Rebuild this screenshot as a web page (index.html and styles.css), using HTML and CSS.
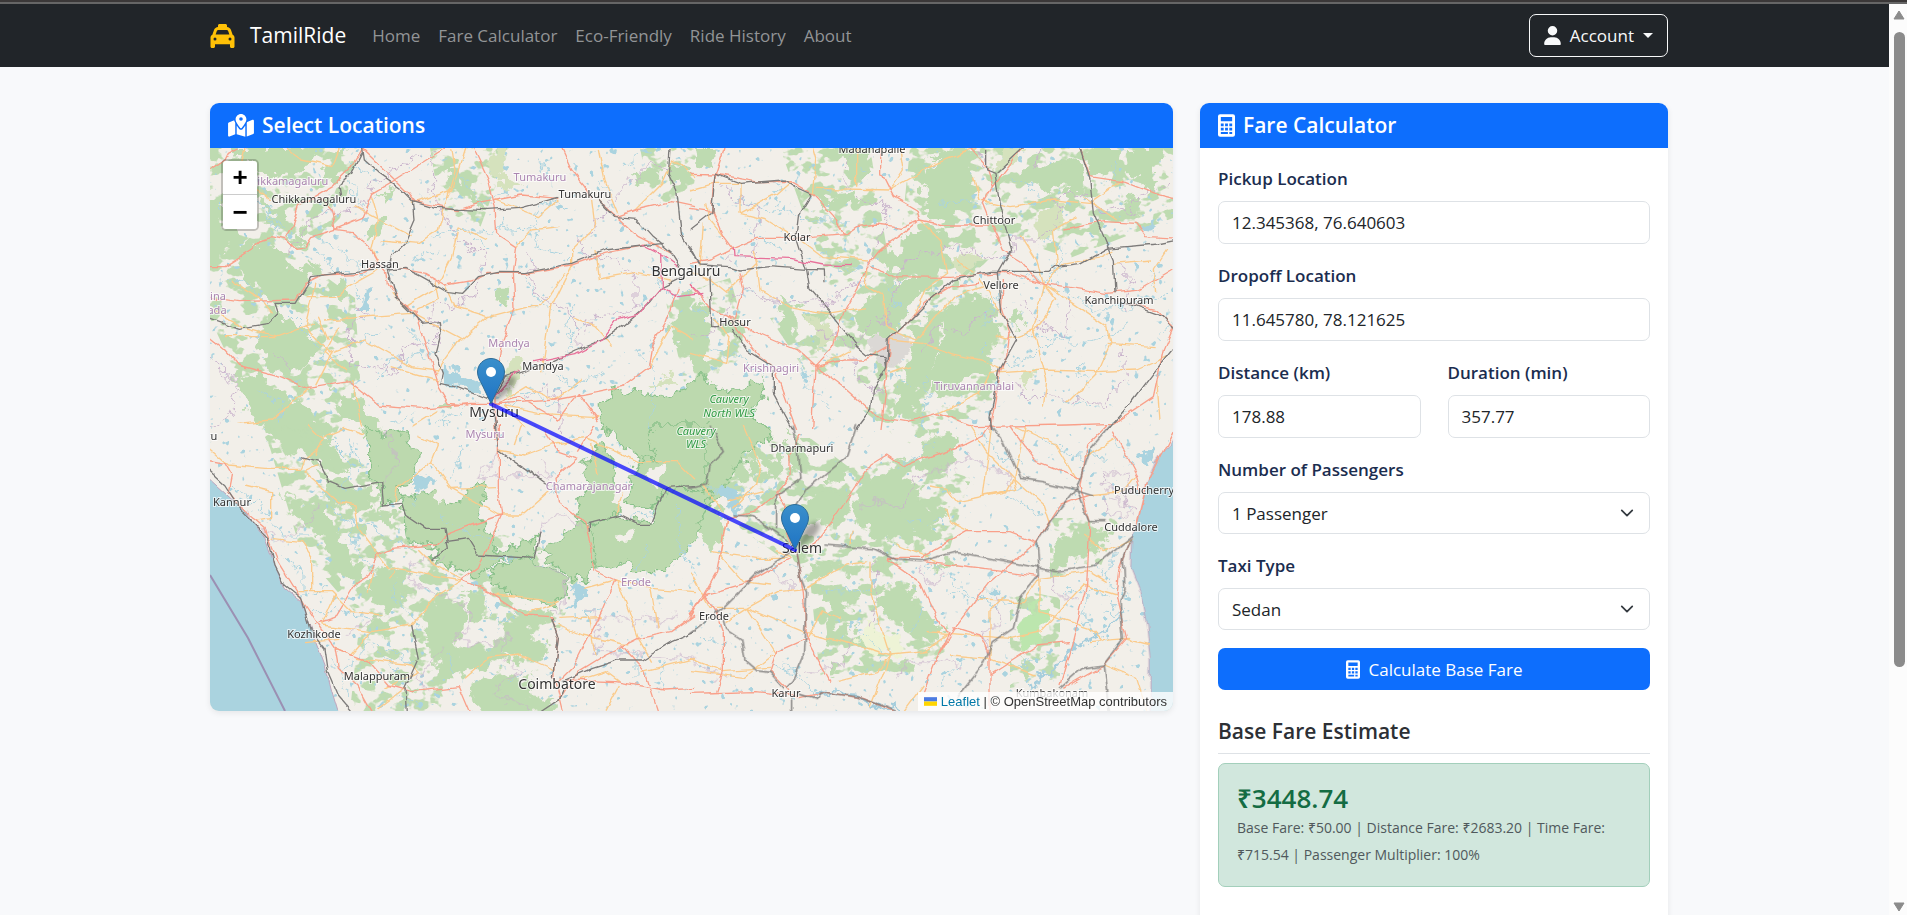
FILE: index.html
```html
<!DOCTYPE html>
<html lang="en">
<head>
<meta charset="utf-8">
<meta name="viewport" content="width=device-width, initial-scale=1">
<title>TamilRide</title>
<link rel="stylesheet" href="styles.css">
</head>
<body>
<svg class="symbols" aria-hidden="true">
  <symbol id="i-calc" viewBox="0 0 384 512"><path fill-rule="evenodd" d="M48 0H336A48 48 0 0 1 384 48V464A48 48 0 0 1 336 512H48A48 48 0 0 1 0 464V48A48 48 0 0 1 48 0ZM64 64V160H320V64ZM64 208V272H128V208ZM160 208V272H224V208ZM256 208V272H320V208ZM64 304V368H128V304ZM160 304V368H224V304ZM256 304V368H320V304ZM64 400V448H224V400ZM256 400V448H320V400Z"/></symbol>
  <symbol id="i-pin" viewBox="0 0 28 46">
    <path d="M14 .5C6.500.5.5 6.500.5 14c0 5 2.500 8.500 4.500 12.500L14 45.500l9-19c2-4 4.500-7.500 4.500-12.500C27.500 6.500 21.500.5 14 .5z" fill="url(#pinFill)" stroke="#2e6c97"/>
    <circle cx="14" cy="14" r="5" fill="#fff"/>
  </symbol>
</svg>
<div class="topline"></div>
<div class="window">
<div class="page">
  <nav class="navbar">
    <div class="container navbar-inner">
      <a class="brand" href="#">
        <svg class="icon-taxi" viewBox="0 0 512 512" aria-hidden="true"><path d="M192 0c-17.700 0-32 14.300-32 32V64c0 .1 0 .1 0 .2c-38.600 2.200-72.300 27.300-85.200 64.100L39.600 228.800C16.400 238.400 0 261.300 0 288V432v48c0 17.700 14.300 32 32 32H64c17.700 0 32-14.300 32-32V432H416v48c0 17.700 14.300 32 32 32h32c17.700 0 32-14.300 32-32V432 288c0-26.700-16.400-49.600-39.600-59.200L437.200 128.300c-12.900-36.800-46.600-62-85.200-64.100c0-.1 0-.1 0-.2V32c0-17.700-14.300-32-32-32H192zM165.400 128H346.600c13.600 0 25.700 8.600 30.200 21.400L402.900 224H109.100l26.100-74.600c4.500-12.800 16.600-21.400 30.200-21.400zM96 288a32 32 0 1 1 0 64 32 32 0 1 1 0-64zm288 32a32 32 0 1 1 64 0 32 32 0 1 1 -64 0z"/></svg>
        <span>TamilRide</span>
      </a>
      <ul class="nav-links">
        <li><a href="#">Home</a></li>
        <li><a href="#">Fare Calculator</a></li>
        <li><a href="#">Eco-Friendly</a></li>
        <li><a href="#">Ride History</a></li>
        <li><a href="#">About</a></li>
      </ul>
      <button class="account" type="button">
        <svg class="icon-user" viewBox="0 0 448 512" aria-hidden="true"><path d="M224 256A128 128 0 1 0 224 0a128 128 0 1 0 0 256zm-45.700 48C79.800 304 0 383.800 0 482.300C0 498.700 13.300 512 29.700 512H418.300c16.400 0 29.700-13.300 29.700-29.700C448 383.800 368.200 304 269.700 304H178.300z"/></svg>
        <span>Account</span><span class="caret"></span>
      </button>
    </div>
  </nav>

  <main class="container layout">
    <section class="card">
      <h2 class="card-title">
        <svg class="icon-map" viewBox="0 0 576 512" aria-hidden="true"><path d="M408 120c0 54.600-73.100 151.900-105.200 192c-7.700 9.600-22 9.600-29.600 0C241.100 271.900 168 174.600 168 120C168 53.700 221.700 0 288 0s120 53.700 120 120zm8 80.400c3.500-6.900 6.700-13.800 9.600-20.600c.5-1.200 1-2.500 1.500-3.700l116-46.400C558.900 123.400 576 135 576 152V422.800c0 9.800-6 18.600-15.100 22.300L416 503V200.400zM137.600 138.300c2.400 14.100 7.200 28.300 12.800 41.500c2.900 6.800 6.100 13.700 9.600 20.600V451.800L32.900 502.700C17.100 509 0 497.400 0 480.400V209.600c0-9.800 6-18.600 15.100-22.300l122.600-49zM327.800 332c13.900-17.400 35.700-45.700 56.200-77V504.300L192 449.400V255c20.500 31.300 42.300 59.600 56.200 77c20.500 25.600 59.100 25.600 79.600 0zM288 152a40 40 0 1 0 0-80 40 40 0 1 0 0 80z"/></svg>
        Select Locations
      </h2>
      <div class="map">
        <svg class="map-canvas" viewBox="0 0 963 563" preserveAspectRatio="xMidYMid slice" role="img" aria-label="Route map from Mysuru to Salem">
          <defs>
            <linearGradient id="pinFill" x1="0" y1="0" x2="0" y2="1"><stop offset="0" stop-color="#3a8fcb"/><stop offset="1" stop-color="#1f74c4"/></linearGradient>
            <filter id="rough" filterUnits="userSpaceOnUse" x="-20" y="-20" width="1010" height="610" color-interpolation-filters="sRGB"><feTurbulence type="fractalNoise" baseFrequency="0.07" numOctaves="4" seed="4"/><feDisplacementMap in="SourceGraphic" scale="26" xChannelSelector="R" yChannelSelector="G"/></filter>
            <filter id="wiggle" filterUnits="userSpaceOnUse" x="-20" y="-20" width="1010" height="610" color-interpolation-filters="sRGB"><feTurbulence type="fractalNoise" baseFrequency="0.06" numOctaves="2" seed="9"/><feDisplacementMap in="SourceGraphic" scale="7" xChannelSelector="R" yChannelSelector="G"/></filter>
            <filter id="jag" filterUnits="userSpaceOnUse" x="-20" y="-20" width="1010" height="610" color-interpolation-filters="sRGB"><feTurbulence type="fractalNoise" baseFrequency="0.09" numOctaves="3" seed="2"/><feDisplacementMap in="SourceGraphic" scale="18" xChannelSelector="R" yChannelSelector="G"/></filter>
            <filter id="speckle" filterUnits="userSpaceOnUse" x="-20" y="-20" width="1010" height="610" color-interpolation-filters="sRGB"><feTurbulence type="fractalNoise" baseFrequency="0.06 0.08" numOctaves="3" seed="11"/><feColorMatrix values="0 0 0 0 0  0 0 0 0 0  0 0 0 0 0  14 0 0 0 -7.200" result="spots"/><feComposite in="SourceGraphic" in2="spots" operator="in"/></filter>
            <filter id="drops" filterUnits="userSpaceOnUse" x="-20" y="-20" width="1010" height="610" color-interpolation-filters="sRGB"><feTurbulence type="fractalNoise" baseFrequency="0.13" numOctaves="2" seed="21"/><feColorMatrix values="0 0 0 0 0  0 0 0 0 0  0 0 0 0 0  0 16 0 0 -11.200" result="spots"/><feComposite in="SourceGraphic" in2="spots" operator="in"/></filter>
          </defs>
          <rect class="land" width="963" height="563"/>

          <g filter="url(#speckle)">
            <path class="wood" d="M0 0H150L130 70 90 110 145 150 150 230 120 300 190 330 200 400 260 430 230 563H140L150 470 90 400 60 300 0 170zM220 0H300L270 80 230 60zM430 0H490L480 60 440 50zM455 150 520 130 540 200 480 260zM570 0H660L680 120 620 140zM700 0H963V70L860 110 800 90 760 130 800 180 780 260 700 300 650 260 640 150 690 100zM560 170 640 160 650 210 600 230zM500 290 600 290 640 320 700 310 760 330 740 400 690 420 740 500 700 530 610 530 600 430 530 380zM840 370 910 370 890 420 840 430zM800 440 850 450 850 530 800 540zM250 380 380 400 350 480 260 470z"/>
          </g>
          <rect class="lake" width="963" height="563" filter="url(#drops)"/>

          <g filter="url(#rough)">
            <g transform="translate(-5 -8) scale(.33333)">
              <path class="wood" d="M60 24H330L340 60 290 90 250 110 170 100 150 60 100 80zM380 24H440L400 110 350 130zM0 160 30 210 60 260 100 270V310L60 330 20 380 0 350zM110 310 200 320 270 380 310 400 300 450 270 490H210L150 440 100 380zM210 490 240 540 290 560 330 620 300 680 250 700 190 690 160 620 180 560zM250 290 300 280 310 310 260 320zM390 420 430 440 410 475 385 460zM500 240 545 230 540 270 500 310 485 290zM160 170 230 220 240 250 180 230zM80 700 180 720 260 770 300 800 350 860 440 1000 330 960 200 900 180 870 130 810zM380 760H440L500 820 560 900 480 900 410 800zM695 80 760 100 800 160 850 195 840 210 770 175 740 120zM1400 520 1500 480V720L1440 640 1400 600zM1390 80 1440 80 1445 110 1400 140zM1280 100 1370 95 1340 130 1290 125zM700 800 735 795 730 820 700 820zM880 440 910 440 900 490 870 480zM520 160 570 150 550 190zM300 350 340 380 320 400z"/>
              <path class="wood light" d="M850 40 900 24 890 90 930 140 920 155 880 130 850 90zM920 660 950 660 930 760 900 750zM1330 740 1380 700 1400 740z"/>
            </g>
            <g transform="translate(480 -8) scale(.33333)">
              <path class="wood" d="M15 24H85L60 90 20 80zM700 90 760 60H850V170L820 220 760 250 700 210 720 160 680 130zM640 290 700 260 760 280 780 360 730 410H640L600 400 570 350 640 330zM600 420H700L720 450 660 480 640 560 590 590 500 580 490 520 560 440zM760 500 900 460 910 540 930 570 910 640 870 690 780 740 720 780V700L760 600zM680 560 760 500 750 600 710 740 640 840 610 830 620 740 650 700zM970 100 1150 60 1190 90 1180 160 1100 150 1000 120zM1190 24H1290L1280 90 1230 110 1190 70zM1320 24H1430L1380 120 1310 100zM1300 190 1350 170 1360 220 1310 230zM1370 120H1410L1400 170 1370 160zM450 24H550L540 90 500 120 470 110zM410 170 500 160 490 200 430 210zM270 470 320 500V600L290 610zM385 155H415V210L390 200zM380 220 405 240 390 265zM950 540 990 510 1000 540 960 580zM700 60 760 30 850 24 840 60z"/>
              <path class="wood light" d="M1050 220 1120 190 1110 270 1040 300zM350 520 430 560 440 610 380 620zM940 30 1000 24 960 90 920 90zM780 370 860 330 890 350 800 400zM980 700 1030 700 1020 740z"/>
              <path class="urban" d="M540 600 600 580 680 600 610 690 550 670z"/>
            </g>
            <g transform="translate(-5 277) scale(.33333)">
              <path class="wood" d="M180 10 300 20 360 80 340 100 290 95 220 60zM340 140 400 160 440 190 530 170 490 250 420 250 380 230zM250 250 340 235 370 240 380 310 420 340V400L470 430 480 470H430L380 420 360 350 330 310zM490 430 610 450V500L560 570 500 520zM660 580 700 510 790 550 800 590 750 640 760 660 700 750V690L670 640zM700 680 890 650 920 720 850 700 770 760 700 750zM890 580 1040 560 1020 600 960 640 1030 650 1020 710 950 710 890 680zM800 790 880 740 940 760 980 750 960 810 1050 820 1040 840 980 870H820zM780 500 850 510 840 590 810 590zM520 580 550 590 540 620 510 610zM590 770 660 790 620 800zM520 240 560 270 580 310 540 300zM230 205 300 210 240 215z"/>
            </g>
            <g transform="translate(480 277) scale(.33333)">
              <path class="wood" d="M100 -20 170 30 100 100 110 180 70 200 30 170 0 190V-20zM0 190 50 200V230L100 260V330L60 380 0 240zM120 110 190 100 200 150 150 180zM330 240 400 190 450 200 480 250 420 300 370 300zM480 230 560 150 640 90 630 160 700 170 680 240 640 270V340L590 370 510 300zM700 40 780 20 820 100 750 150 690 130zM640 240 760 250 740 330 640 340zM350 430 410 410 430 450 360 460zM410 500 480 480 500 530 440 560 450 610 490 600 480 640 420 660zM560 500 650 480 680 560 740 590 750 640 690 650 640 600 570 560zM1090 360 1150 320 1230 310 1260 340 1200 390 1090 430zM420 140 470 135 460 170 420 165zM220 100 280 90 260 150 220 160zM300 20 330 60 360 90 340 140 300 130zM480 430 530 440 500 460zM740 430 770 400 800 420zM650 700 680 750 620 730zM980 700 1030 730 1010 760zM420 710 460 730 420 740zM550 390 600 400 570 440zM820 160 850 165 840 190z"/>
              <path class="wood bright" d="M990 590 1030 540 1090 550 1040 640 1000 690 970 640z"/>
              <path class="field" d="M530 580 570 620 640 640 640 690 560 680 500 650z"/>
            </g>
          </g>
          <g filter="url(#jag)">
            <g transform="translate(-5 -8) scale(.33333)">
              <path class="park" d="M1180 790 1240 750 1300 760 1370 770 1450 740 1485 700 1520 740 1600 750 1665 720 1675 770 1640 820 1705 880 1600 960 1560 1040 1510 1100H1380L1350 1030 1310 960 1210 880z"/>
            </g>
            <g transform="translate(-5 277) scale(.33333)">
              <path class="park" d="M480 0H500L540 30 610 20 620 80 640 90 620 180 580 190 590 220 540 235 530 180 500 160V60zM590 215 690 200 720 210V240L760 230 830 165 840 190 820 290 860 320 870 380 980 350 1000 320 990 400 900 400 820 450 770 440 680 400 700 370 610 350zM850 440 920 400 1000 410 1080 450 1090 500 1060 540 950 520 870 480zM1010 380 1120 290 1150 300 1170 430 1150 470 1100 460zM1150 300 1230 270 1340 290 1350 240 1380 190H1520L1470 350 1380 440H1280L1270 410 1170 430zM1110 260 1150 180 1140 120 1180 60 1220 100 1230 150 1240 280 1130 290zM1260 240 1280 160 1310 100 1350 110 1330 0H1500V200L1380 190 1350 250z"/>
              <path class="clearing" d="M690 190 725 165 740 150 730 210 700 240zM1240 330 1290 320 1280 350 1240 350zM1320 150 1370 120 1390 140 1350 190zM1240 150 1260 170 1240 260 1225 220z"/>
            </g>
          </g>

          <g filter="url(#jag)">
            <g transform="translate(-5 -8) scale(.33333)">
              <path class="lake" d="M480 460 500 450V510L440 510 470 490zM715 670 760 700 830 730 840 770 780 750 720 720z"/>
              <path class="stream" d="M160 170 230 270M190 210 210 290M420 110 480 200 520 160M750 100 830 180 900 160M900 230 870 280 750 270 680 290M980 260 1020 180 1080 200M880 265 990 270 1010 330 1080 350M440 70 500 110M470 490 450 420 380 390 340 330M600 560 700 660M1110 500 1080 560 1110 620 1060 670M950 400 1000 480 1040 510M1340 380 1400 480 1470 450M250 520 330 600 350 660 420 640M30 180 90 240M40 430 120 420 190 500M330 290 420 340 480 400M700 640 560 660 520 720M1300 630 1350 700 1330 860M1220 160 1180 120M1270 80 1320 24M900 800 960 760 1080 800M780 800 700 860M450 600 520 580M620 370 700 330M1040 700 1100 740 1200 700M150 740 230 790 220 860M560 850 640 820M1000 60 1040 130M800 300 850 330"/>
            </g>
            <g transform="translate(480 -8) scale(.33333)">
              <path class="lake" d="M1360 250 1395 250 1390 275 1360 270zM1240 520 1260 520 1255 545 1240 540zM340 690 355 700 345 710z"/>
              <path class="stream" d="M140 180 260 210 370 240 480 240M170 260 220 300 280 330M400 330 450 390 500 400M750 190 830 180 890 200M940 450 900 520 880 560M930 395 1060 420 1150 470 1220 510 1330 500 1440 460M1080 420 1120 330 1080 300M940 680 1030 650 1080 600 1200 610 1310 560M600 430 630 500M960 110 1040 150 1060 200M60 640 160 650 220 720M330 640 360 740 420 800M700 860 720 760 700 700M1180 660 1160 700 1210 740M1370 390 1400 440M1280 60 1250 130M610 700 660 740M0 500 60 520M250 130 270 200M990 590 1080 590M390 620 440 660M1440 560 1410 590M1110 780 1200 800M860 640 900 600M500 60 540 120"/>
            </g>
            <g transform="translate(-5 277) scale(.33333)">
              <path class="lake" d="M630 150 690 160 660 190 630 195zM1100 470 1155 490 1120 540 1080 560 1110 510z"/>
              <path class="stream" d="M90 190 160 240 230 330 310 330M370 40 430 100 420 200M400 280 490 300 560 350 620 370M370 250 440 300 450 370 500 440M240 400 300 440 300 520 370 490M430 30 470 150M660 160 620 240M740 160 770 60M690 260 780 320 850 340M310 560 400 560 500 580M490 640 590 700 630 720M640 600 560 500 600 460M850 400 930 400M830 510 880 600 960 560M1190 560 1110 570M740 740 720 680M410 740 460 700 500 620M1280 270 1360 260M1290 430 1330 370M1290 690 1290 760M1420 240 1430 380 1470 440M380 700 440 820M640 840 590 820M1080 160 1040 210M970 740 910 770M540 690 580 740M1380 720 1360 790M340 210 420 230"/>
            </g>
            <g transform="translate(480 277) scale(.33333)">
              <path class="lake" d="M80 190 160 200 140 270 110 250 120 220 80 210zM890 500 930 500 920 520zM1340 90 1400 60 1380 110 1340 100z"/>
              <path class="stream" d="M40 185 190 215 240 200M700 420 760 440 850 520 970 540M250 720 320 740 370 810M400 490 480 500 540 490M500 600 560 650 580 720M660 620 700 550M870 20 920 100 1000 110M1060 40 1150 90 1250 100M1110 500 1230 500 1300 560M1180 510 1190 590M1220 420 1270 480 1320 510M640 290 700 280 760 300M950 210 1060 270M1270 380 1250 460M780 500 850 520M0 60 60 30M740 780 830 700M30 640 120 660M1320 120 1280 40M730 60 640 120M1060 690 960 740M1200 660 1260 640M1250 560 1310 570"/>
              <path class="river" d="M370 800 500 810 560 840 640 857M1010 790 1110 720 1160 660 1240 620 1300 560"/>
            </g>
          </g>

          <g filter="url(#jag)">
            <g class="district">
              <path transform="translate(-5 -8) scale(.33333)" d="M690 24 670 60 700 120 680 160 720 240 760 300 840 340 820 460 750 500 690 480 680 540 700 600 590 620 580 700 500 680 440 660 430 560 500 530 440 500M320 240 380 215 470 210 500 130 560 90 640 50M1120 300 1170 260 1200 200 1300 100 1330 70 1400 90M1120 300 1140 350 1230 350 1290 420V500L1150 540 1140 580M970 340 990 460 1110 530 1120 640M15 640 60 700 100 740 80 820 15 870M1060 870 1070 770 1030 740 960 780M210 640 250 680M240 340 270 320 330 230"/>
              <path transform="translate(480 -8) scale(.33333)" d="M475 24 470 150 530 190 590 190 590 260 550 330 530 420 460 440 420 500 380 480 240 490 180 450 120 470 110 540 60 580 0 590M380 570 440 590 490 620 560 540 590 560 620 430 640 370 740 330 800 320 890 350 960 350 970 300 1030 300 1100 250 1120 200 1090 180 1120 160 1200 170 1220 210 1280 200 1330 230 1320 180 1440 130M100 130 130 180 210 200 190 340 100 350M860 24 900 90M1030 80 1060 24M700 640 740 560 820 590 860 540 930 510M490 640 500 720 580 770M990 480 1060 560 1130 590 1140 480M1280 370 1330 420 1300 500M980 720 1000 760 1140 780 1230 790 1310 720 1300 620"/>
              <path transform="translate(-5 277) scale(.33333)" d="M110 250 180 330 220 350 330 270 340 240M540 10 580 110 530 170M620 480 610 430 640 410 720 400M620 480 790 540 800 600 740 650 880 655 910 630 890 690 950 750 900 760 870 810 910 820 980 857M1000 320 1020 280 1080 275 1140 320M990 410 1080 450 1080 540 1040 560M880 75 820 160 900 150 1040 150 1000 100M1150 560 1180 580 1240 580 1290 600 1300 570 1360 590 1420 570M1180 590 1180 680 1290 690 1470 700M720 660 640 760 660 800M430 620 540 570"/>
              <path transform="translate(480 277) scale(.33333)" d="M1240 140 1310 150 1320 200 1290 210 1330 260 1250 270 1240 210 1270 190 1240 170zM1260 220 1300 240 1310 180 1340 190M680 420 720 480 760 450 740 430M550 400 560 500 540 600M510 250 560 230 640 250 680 150 790 130 830 100 900 130 960 140 960 200M820 720 720 710 640 720 620 760M920 520 940 600 880 620 900 700M210 430 300 470 300 500M0 700 100 760M360 740 460 720 480 640M1090 430 1090 500 1150 520"/>
            </g>
          </g>

          <g filter="url(#wiggle)">
            <g transform="translate(-5 277) scale(.33333)">
              <path class="sea" d="M0 150 110 250 180 340 210 420 240 490 290 530 330 640 360 720 380 800 410 900H-20z"/>
            </g>
            <g transform="translate(480 277) scale(.33333)">
              <path class="sea" d="M1480 0 1400 110 1370 180 1340 300 1325 340 1322 430 1350 500 1370 600 1380 700V900H1500z"/>
            </g>
            <g class="secondary">
              <path transform="translate(-5 -8) scale(.33333)" d="M240 24 290 60 380 80 400 24M500 170 520 240 500 330 520 370M530 300 640 310 700 270 750 90 740 24M330 430 300 560 380 640 330 740M360 540 620 520 700 480 690 420M370 640 480 600 620 680 700 690M620 520 770 600 850 530 960 500 1010 500 1080 400M720 435 750 500 850 530M1160 180 1170 260 1100 330V380L1040 500 1010 700M935 320 980 270 1060 260M80 420 160 470 200 520M0 500 110 560 220 590 330 550M60 590 210 590M440 720 470 860M1100 530 1170 560 1220 620M310 745 200 840 100 850M765 600 690 700M1180 24 1200 120 1240 220M620 190 740 150 780 24M120 24 100 110 200 180M700 440 600 500 560 460M870 180 1000 230 1060 180M1170 330 1180 420 1290 400 1400 420M300 470 400 470 430 440 520 390M400 560 360 640 420 690M1470 110 1400 60 1370 130 1290 210M960 860 900 800 1000 820 1180 830M880 790 960 740 1050 780 1130 720M560 680 700 720M450 200 620 290M840 300 760 260 740 350 700 430M340 530 370 600M1330 680 1400 560 1470 600M620 860 700 810"/>
              <path transform="translate(480 -8) scale(.33333)" d="M0 150 70 130 150 130 150 220 230 240 310 290M370 165 380 60 370 24M380 145 600 150 740 70 860 24M300 125 260 160 150 220M690 240 750 300 770 400 700 450 670 530M500 24 500 140M850 110 870 180 960 200 1090 180 1200 190 1300 120M740 820 870 760 900 700 1060 690 1220 695 1340 690 1430 650M600 600 700 610 780 640 870 660 940 690M1060 430 1030 570 1070 720 1060 800M1060 440 1120 370 1230 350 1270 330M990 280 1040 360 1060 430M1030 570 950 600 920 590M1100 380 1090 270 1160 230M530 380 530 440 580 470 590 560 680 600 790 470 880 440M0 400 60 420 110 460 200 370 190 330M200 370 210 450 300 500 410 520 530 500M100 290 60 240 50 190M1030 580 1100 480 1060 430 1250 560 1260 610M1250 610 1400 620M1260 610 1220 700 1130 790M1280 240 1180 170M1430 330 1390 390 1400 460M600 700 660 680M0 640 110 670 120 590 70 540M390 680 480 630M850 400 800 360M320 290 400 350 540 360M1400 720 1410 840M940 530 870 420M630 24 640 90 600 150M1270 370 1380 360M40 250 30 380"/>
              <path transform="translate(-5 277) scale(.33333)" d="M0 60 70 120 180 130 290 130 300 100 350 60M310 0 350 40 330 90M350 40 420 10 480 30M200 340 290 350 320 390 320 500M120 180 200 200 200 280 150 290M340 120 300 140 400 230 450 240 460 310 520 390M520 390 550 430 620 440 770 465M570 440 550 460M640 370 690 420 770 460M570 230 580 190 680 110 700 60 640 30M680 110 740 190 870 185M740 190 880 270 950 270 1030 200M280 500 380 500 440 560 530 570M350 600 500 620 620 600 700 510 770 465M390 670 440 690 500 620M450 700 620 720 640 740 540 790M780 760 850 700 950 690 1050 735M960 570 1060 530 870 510M1060 580 1190 575M1140 490 1230 465 1340 490 1470 500M1240 470 1300 640 1340 710M1340 490 1360 610M1270 660 1130 630 1060 600M1240 770 1200 740 1110 770M1150 570 1170 690M1310 740 1470 700M1200 857 1240 780M880 75 960 90 1040 60 1140 40 1240 80 1300 110 1420 110 1470 160M950 0 930 60M1180 150 1160 60M1230 270 1250 200M300 650 400 640M490 500 500 440M390 510 350 600M520 850 600 790"/>
              <path transform="translate(480 277) scale(.33333)" d="M160 0 210 120 200 180 130 250M40 180 110 280 90 390 160 470 240 480M170 550 110 590M170 550 60 550 0 440M170 550 340 620 500 660 600 690 710 680M170 550 260 500 350 490 470 420 530 410M170 550 260 690M0 700 100 740 240 730M350 640 400 560 450 580M540 410 540 500 600 690 540 850M840 0 890 80 970 160 950 200 800 230 770 190 720 180M770 250 780 290 840 320M905 0 880 210 980 190 970 160M1010 0 970 160 1060 240 1080 300M700 680 780 620M710 620 960 640 1050 620 1180 480 1280 510M780 690 900 700 1040 750M860 525 1000 530 1050 460 1050 560 1200 610 1240 650M1050 460 1200 440 1250 470M970 0 1100 60 1160 160M1180 100 1280 40M1190 210 1300 200 1340 150M900 700 900 560 940 520M620 360 740 410M220 200 110 230M300 400 260 380M480 360 490 320M640 860 700 780M1300 640 1380 660M1200 650 1320 640M1240 720 1340 760 1370 857M440 770 560 740 600 690M60 380 200 400 290 400M1180 330 1240 380 1330 340M250 690 160 760 0 740"/>
            </g>
            <g class="trunk">
              <path transform="translate(-5 -8) scale(.33333)" d="M0 100 60 60 70 40 100 24M470 30 440 80 380 140 330 170 280 200 260 260 240 300M0 380 60 380 140 330 170 300 200 290 245 300 270 325 300 320 320 290 390 268 440 275 490 320 520 370 545 400 550 430 580 480 630 520 670 640 700 740 730 790 790 795M470 24 570 120 610 160 630 185 760 212 820 190 950 165 1060 175M570 120 720 24M570 120 500 160 470 235 390 268 380 210 340 170M805 24 850 120 870 200 875 280 935 320 925 400 930 500 890 610 870 720V900M1070 24 1100 90 1145 145 1160 175M0 470 100 485 270 480 300 430 350 405 470 400 520 370M580 385 660 400 720 435 810 420 850 400 960 400 1100 375 1200 340 1320 315M1180 180 1235 230 1300 290 1400 340M1235 230 1290 210 1400 185 1470 200M1420 440 1380 550 1340 620 1330 680 1250 740 1050 780 900 790 800 790 650 805 520 795 430 725 310 745 230 710 100 675 60 630 0 580M870 790 940 770 1060 840 1120 760 1180 840"/>
              <path transform="translate(480 -8) scale(.33333)" d="M105 24 70 130 65 210 100 290 130 330M0 100 75 102 200 125 300 125 370 165 430 230 460 280M0 205 70 215M0 370 60 360 130 325 200 295 310 295 470 280 500 260 560 252 640 262 690 240 760 255 900 255M575 24V100L610 170 680 210 690 240 630 290 570 330 530 380 500 450 450 540 430 620 375 680 365 870M840 24 890 80 910 140 880 190 900 240 940 330 990 360 1050 430M1000 24 910 140M540 375 600 410 780 412 950 400 1060 430 1250 460 1350 450 1450 390M870 430 780 440 700 490 650 550 600 600 590 700 570 870M1170 24 1200 110 1300 125 1390 160 1470 180M940 420 935 500 960 580 950 650 930 700 900 870M0 430 50 490 110 530 180 570 320 630 375 680 460 660 520 660 590 620M110 530 200 640 250 680 320 870M375 680 470 750 560 830 650 845 740 820 850 860 1130 855 1270 850 1390 770 1420 630 1450 560 1400 510 1310 490M1120 270 1240 245 1340 250 1370 290 1470 295M150 400 160 440 130 550"/>
              <path transform="translate(-5 277) scale(.33333)" d="M0 105 60 115 80 150 70 200 120 260 180 310 220 410 300 540 340 600 390 670M330 600 390 580 450 480 480 460 520 390 560 370 690 360 730 325 800 300 890 270M880 0V200L890 270 850 360 820 430 770 465 850 500 960 570 1040 575 1060 640 1050 720V760L1080 880M390 670 400 730 460 790 510 880M390 670 490 710 550 780 620 800 760 785 800 880M1020 20 1060 80 1120 100 1050 160 1060 230 1140 295 1160 370 1165 435 1230 465 1190 560 1110 720 1060 770M1170 0 1120 80M1060 830 1120 740 1200 690 1300 640 1400 620 1470 570M1080 765 1230 770 1380 795 1470 790M1250 660 1320 740 1365 880"/>
              <path transform="translate(480 277) scale(.33333)" d="M330 30 300 100V150L260 200 290 240V320L316 370 340 500 350 640 260 680 240 740 300 800M350 370 380 350 440 270 540 120 590 90 640 125 700 100 820 60 880 30 900 0M590 400 690 470 750 600 780 620 740 700 700 800M590 400 690 400 830 320 960 320 1040 350 1110 240 1200 210M700 410 860 430 1050 455M1040 350 900 470 800 600 740 700M790 605 870 630 900 700V880M960 0 1040 110 1170 160M1250 0 1190 60 1170 180 1200 290 1190 480 1150 640 1110 780M1320 350 1290 430 1280 520 1310 640 1240 720 1120 790M0 805 200 800 330 815 400 800 520 820 640 870M110 280 200 260 270 200M110 280 80 440 40 510 0 580M40 510 180 470 300 400M40 510 80 560 100 620V740L80 800M350 640 420 770M900 750 1040 660 1140 650M1450 20 1370 180 1340 300M1270 20 1340 150 1350 200M0 570 50 510"/>
            </g>
            <g class="rail">
              <path transform="translate(-5 -8) scale(.33333)" d="M470 24 475 60 520 100 590 150 625 185 690 205 840 212 940 205 1060 172M470 40 440 100 405 135 410 170M625 185 630 240 600 310 560 350 550 390 570 470 610 510 650 550 700 545 705 580 690 640 712 700 705 730 770 745 855 780M550 390 600 385 650 410 730 455 770 460 820 410 880 397 960 398 1100 370 1200 330 1310 318 1370 310M0 530 100 565 190 550 220 520 210 490 270 490 320 410 400 400 530 385M1180 180 1230 230 1290 235 1340 290 1400 340 1425 380M1395 24 1390 100 1415 150 1430 290 1470 350M1430 410 1370 440 1330 490 1250 560 1200 595 1110 630 1040 665 900 710 860 780 880 920"/>
              <path transform="translate(480 -8) scale(.33333)" d="M75 102 150 130 280 120 310 140 365 165 325 230 318 290 350 390 360 450 430 530 500 620 530 645 585 650 590 680 550 750 545 810 500 870M0 320 30 375 120 380 150 390 240 380 350 388 400 390 402 430M60 410 65 560 85 560M75 102 65 220 0 270M130 570 170 630 250 680V760L310 870M590 680 595 600 660 540 720 480 790 420 900 397H1080L1100 380 1170 370 1250 325 1400 312 1470 298M890 24V90L915 100 930 200 965 330 925 400 935 520 980 600 930 690 900 830 905 870M1170 24 1200 120 1210 220 1255 325 1270 360 1275 460M1310 490 1420 530 1470 590M1000 24 920 100M1470 600 1390 700 1330 780 1250 870"/>
              <path transform="translate(-5 277) scale(.33333)" d="M0 125 60 180 110 260 190 340 210 420 240 480 290 520 320 620 360 670 370 740 400 810 460 880M620 600 640 700 600 790 605 880M880 75 960 130 1030 180M290 95 340 110 370 170 420 190 530 170 535 240 590 235 600 270 660 310 720 310 730 370 680 405M720 350 790 340 820 390 990 400 1005 320M1150 320V295L1250 270 1300 295H1340L1380 190 1470 185M1040 580 1060 640 1045 760M1070 770 1160 730 1240 705H1310L1400 650 1470 620M1000 870 1060 830 1080 790"/>
              <path transform="translate(480 277) scale(.33333)" d="M310 0 320 60 330 160 260 210V310M500 0 470 90 350 190 320 240M130 270 190 275 260 320 320 370M400 360 550 372 620 405 690 410 800 380 1000 420 1100 440 1220 420 1330 330M316 370 200 450 100 550 0 625M318 380 330 450 350 500 340 700 310 770 290 790M305 820V880M100 570 110 610 155 640 165 710 200 740 240 745 280 790M330 805 380 820 390 800 500 815 600 850 640 870M1260 0 1200 70 1160 190 1080 290 1042 350 1048 450 990 520 970 610 910 650 880 720 800 820M900 0 940 50 990 160 1060 170 1160 195 1210 210M1160 190 1200 290 1250 290M1325 340 1300 400 1305 490 1290 530 1300 640 1240 720 1180 730 1110 790M1240 720 1260 880M0 190 50 180 60 120 100 80 60 0"/>
            </g>
            <g class="motorway">
              <path transform="translate(-5 -8) scale(.33333)" d="M1310 315 1380 350 1420 380M1370 340 1372 440 1420 470 1495 460M1370 440 1300 520 1240 535 1190 600 1110 640 990 665M940 690 865 770"/>
              <path transform="translate(480 -8) scale(.33333)" d="M130 325 132 350 300 355 400 375 485 377M0 430 40 470"/>
            </g>
          </g>
          <path class="sea-border" d="M0 427 38 490 75 563"/>

          <g class="city">
            <text x="104" y="55">Chikkamagaluru</text><text x="375" y="50">Tumakuru</text><text x="170" y="120">Hassan</text><text x="333" y="222">Mandya</text>
            <text x="662" y="5">Madanapalle</text><text x="587" y="93">Kolar</text><text x="784" y="76">Chittoor</text><text x="791" y="141">Vellore</text><text x="909" y="156">Kanchipuram</text><text x="525" y="178">Hosur</text>
            <text x="1" y="292">yu</text><text x="22" y="358">Kannur</text><text x="104" y="490">Kozhikode</text><text x="167" y="532">Malappuram</text><text x="592" y="304">Dharmapuri</text><text x="934" y="346">Puducherry</text><text x="921" y="383">Cuddalore</text><text x="504" y="472">Erode</text><text x="576" y="549">Karur</text><text x="842" y="549">Kumbakonam</text>
          </g>
          <g class="city big"><text x="476" y="128">Bengaluru</text><text x="284" y="269">Mysuru</text><text x="347" y="541">Coimbatore</text><text x="592" y="405">Salem</text></g>
          <g class="city region">
            <text x="76" y="37">Chikkamagaluru</text><text x="330" y="33">Tumakuru</text><text x="299" y="199">Mandya</text><text x="561" y="224">Krishnagiri</text><text x="764" y="242">Tiruvannamalai</text><text x="275" y="290">Mysuru</text><text x="379" y="342">Chamarajanagar</text><text x="426" y="438">Erode</text><text x="8" y="152">ina</text><text x="7" y="166">ada</text>
          </g>
          <g class="city reserve"><text x="519" y="255">Cauvery</text><text x="519" y="269">North WLS</text><text x="486" y="287">Cauvery</text><text x="486" y="300">WLS</text></g>

          <path class="pin-shadow" d="M282 256 290 236Q300 224 306 230 306 238 296 246zM586 402 594 382Q604 370 610 376 610 384 600 392z"/>
          <path class="route" d="M281 256 585 402"/>
          <use href="#i-pin" x="267" y="210" width="28" height="46"/>
          <use href="#i-pin" x="571" y="356" width="28" height="46"/>
        </svg>
        <div class="zoom-control">
          <button type="button" aria-label="Zoom in">+</button>
          <button type="button" aria-label="Zoom out">−</button>
        </div>
        <div class="attribution">
          <svg class="flag" viewBox="0 0 12 8" aria-hidden="true"><path fill="#4c7be1" d="M0 0h12v4H0z"/><path fill="#ffd500" d="M0 4h12v4H0z"/></svg>
          <a href="#">Leaflet</a> <span class="sep">|</span> © OpenStreetMap contributors
        </div>
      </div>
    </section>

    <section class="card">
      <h2 class="card-title"><svg class="icon-calc" aria-hidden="true"><use href="#i-calc"/></svg>Fare Calculator</h2>
      <form class="card-body">
        <div class="field"><label for="pickup">Pickup Location</label><input id="pickup" type="text" value="12.345368, 76.640603"></div>
        <div class="field"><label for="dropoff">Dropoff Location</label><input id="dropoff" type="text" value="11.645780, 78.121625"></div>
        <div class="field-row">
          <div class="field"><label for="distance">Distance (km)</label><input id="distance" type="text" value="178.88"></div>
          <div class="field"><label for="duration">Duration (min)</label><input id="duration" type="text" value="357.77"></div>
        </div>
        <div class="field"><label for="passengers">Number of Passengers</label>
          <div class="select"><select id="passengers"><option>1 Passenger</option><option>2 Passengers</option></select><svg viewBox="0 0 16 16" aria-hidden="true"><path d="m2 5 6 6 6-6"/></svg></div></div>
        <div class="field"><label for="taxi">Taxi Type</label>
          <div class="select"><select id="taxi"><option>Sedan</option><option>SUV</option></select><svg viewBox="0 0 16 16" aria-hidden="true"><path d="m2 5 6 6 6-6"/></svg></div></div>
        <button class="primary" type="button"><svg class="icon-calc" aria-hidden="true"><use href="#i-calc"/></svg>Calculate Base Fare</button>
        <h3 class="estimate-title">Base Fare Estimate</h3>
        <div class="estimate">
          <p class="amount">₹3448.74</p>
          <p class="breakdown">Base Fare: ₹50.00 | Distance Fare: ₹2683.20 | Time Fare: ₹715.54 | Passenger Multiplier: 100%</p>
        </div>
      </form>
    </section>
  </main>
</div>
<div class="scrollbar" aria-hidden="true">
  <svg viewBox="0 0 12 10"><path d="M6 1 11 9H1z"/></svg>
  <div class="track"><div class="thumb"></div></div>
  <svg viewBox="0 0 12 10"><path d="M6 9 11 1H1z"/></svg>
</div>
</div>
</body>
</html>
```
FILE: styles.css
```css
* { box-sizing: border-box; }
body {
  margin: 0;
  height: 100vh;
  display: flex;
  flex-direction: column;
  overflow: hidden;
  background: #f8f9fb;
  color: #212529;
  font: 17px/27px "Segoe UI", "Open Sans", "Noto Sans", sans-serif;
}
h2, h3, p, ul { margin: 0; padding: 0; }
a { text-decoration: none; }
button, input, select { font: inherit; color: inherit; }
.symbols { position: absolute; width: 0; height: 0; }

.topline { flex: none; height: 4px; background: #3b3838; border-bottom: 2px solid #666; }
.window { flex: 1; min-height: 0; display: flex; }
.page { flex: 1; min-width: 0; overflow-y: auto; scrollbar-width: none; }
.container { max-width: 1469px; margin: 0 auto; padding-right: 11px; }

.navbar { background: #212529; }
.navbar-inner { display: flex; align-items: center; height: 63px; }
.brand { display: flex; align-items: center; gap: 15px; color: #fff; font-size: 21px; }
.icon-taxi { width: 25px; height: 24px; fill: #ffc107; }
.nav-links { display: flex; gap: 18px; margin-left: 26px; list-style: none; }
.nav-links a { color: #929496; }
.account {
  display: flex; align-items: center; gap: 9px;
  height: 43px; margin-left: auto; padding: 0 14px;
  border: 1px solid #f8f9fa; border-radius: 7px;
  background: none; color: #f8f9fa;
}
.icon-user { width: 17px; height: 19px; fill: #f8f9fa; }
.caret { border: 5px solid transparent; border-top-color: #f8f9fa; border-bottom: 0; }

.layout { display: grid; grid-template-columns: 963fr 468fr; gap: 27px; align-items: start; padding-top: 36px; padding-bottom: 36px; }
.card { min-width: 0; overflow: hidden; border-radius: 9px; background: #fff; box-shadow: 0 2px 6px rgba(0, 0, 0, .08); }
.card-title { display: flex; align-items: center; gap: 8px; height: 45px; padding: 0 18px; background: #0d6efd; color: #fff; font-size: 21px; font-weight: 600; }
.card-title svg { fill: #fff; }
.icon-map { width: 26px; height: 23px; }
.icon-calc { width: 17px; height: 23px; }

.map { position: relative; height: 563px; overflow: hidden; background: #f2efe9; }
.map-canvas { display: block; width: 100%; height: 100%; }
.land { fill: #f2efe9; }
.wood { fill: #bedbb1; }
.light { fill: #d5e2bd; }
.bright { fill: #bce6ae; }
.field { fill: #eef3d6; }
.urban { fill: #dbd8d5; }
.park { fill: #bcd9ae; stroke: #8cc28c; stroke-width: 4; }
.clearing { fill: #f2efe9; }
.lake { fill: #aad3df; }
.sea { fill: #aad3df; stroke: #bfa5bd; stroke-width: 3; }
.stream { fill: none; stroke: #aad3df; stroke-width: 3; }
.river { fill: none; stroke: #a5cddc; stroke-width: 7; }
.district { fill: none; stroke: #c9b3cc; stroke-width: 3; }
.secondary, .trunk, .rail, .motorway { fill: none; stroke-linejoin: round; }
.secondary { stroke: #fbcb8b; stroke-width: 4; }
.trunk { stroke: #f9a08a; stroke-width: 4; }
.rail { stroke: #7d7b7a; stroke-width: 4; }
.motorway { stroke: #e8719a; stroke-width: 4; }
.sea-border { fill: none; stroke: #9b90b3; stroke-width: 2; }
.city { font: 11px "Noto Sans", sans-serif; text-anchor: middle; fill: #333; stroke: #fff; stroke-opacity: .7; stroke-width: 2px; paint-order: stroke; }
.big { font-size: 14px; }
.region { fill: #ab85b0; }
.reserve { fill: #2f9a43; font-style: italic; }
.route { fill: none; stroke: #00f; stroke-opacity: .7; stroke-width: 4; stroke-linecap: round; }
.pin-shadow { fill: #000; opacity: .3; filter: blur(2px); }

.zoom-control { position: absolute; top: 11px; left: 11px; border: 2px solid rgba(0, 0, 0, .2); border-radius: 5px; background-clip: padding-box; }
.zoom-control button { display: block; width: 34px; height: 34px; padding: 0; border: 0; background: #fff; color: #000; font: bold 26px/31px "Liberation Sans", sans-serif; }
.zoom-control button:first-child { border-bottom: 1px solid #ccc; border-radius: 3px 3px 0 0; }
.zoom-control button:last-child { border-radius: 0 0 3px 3px; }
.attribution { position: absolute; right: 0; bottom: 0; padding: 0 6px; background: rgba(255, 255, 255, .8); color: #333; font: 13px/19px "Liberation Sans", Arial, sans-serif; }
.attribution a { color: #0078a8; }
.flag { width: 13px; height: 9px; }

.card-body { padding: 17px 18px 36px; }
.field { margin-bottom: 18px; }
.field label { display: block; margin-bottom: 9px; color: #1b2d4f; font-weight: 600; }
.field-row { display: grid; grid-template-columns: 1fr 1fr; gap: 27px; }
.field input, .field select { display: block; width: 100%; height: 43px; padding: 0 13px; border: 1px solid #dee2e6; border-radius: 7px; background: #fff; }
.field select { height: 42px; appearance: none; }
.select { position: relative; }
.select svg { position: absolute; top: 14px; right: 16px; width: 14px; height: 14px; fill: none; stroke: #343a40; stroke-width: 2; stroke-linecap: round; stroke-linejoin: round; pointer-events: none; }
.primary { display: flex; align-items: center; justify-content: center; gap: 9px; width: 100%; height: 42px; border: 0; border-radius: 7px; background: #0d6efd; color: #fff; }
.primary .icon-calc { width: 14px; height: 19px; fill: #fff; }
.estimate-title { margin-top: 28px; padding-bottom: 8px; border-bottom: 1px solid #dee2e6; font-size: 21px; font-weight: 600; color: #2d3035; }
.estimate { margin-top: 9px; padding: 18px; border: 1px solid #a3cfbb; border-radius: 7px; background: #d1e7dd; }
.amount { color: #146c43; font-size: 26px; line-height: 32px; font-weight: 600; }
.breakdown { color: #50595c; font-size: 14px; line-height: 27px; }

.scrollbar { flex: none; display: flex; flex-direction: column; align-items: center; gap: 12px; width: 18px; padding: 6px 2px 3px 4px; background: #fcfcfc; }
.scrollbar svg { width: 12px; height: 10px; fill: #8b8b8b; stroke: #8b8b8b; stroke-width: 1; stroke-linejoin: round; }
.track { flex: 1; width: 11px; }
.thumb { height: 74%; border-radius: 6px; background: #8b8b8b; }
```
